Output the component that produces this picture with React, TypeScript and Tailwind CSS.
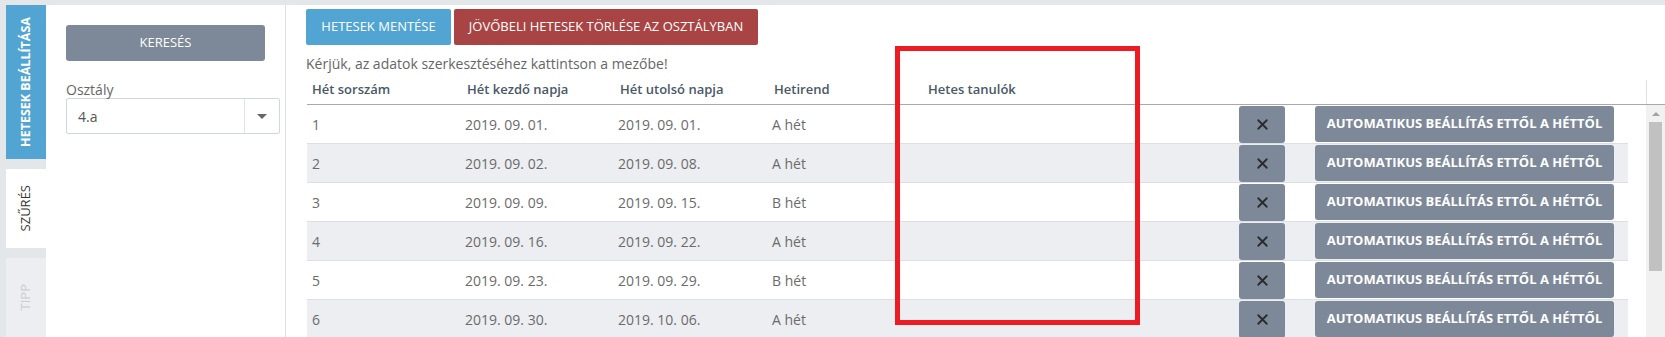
import { X } from "lucide-react"

const rows = [
  { n: "1", start: "2019. 09. 01.", end: "2019. 09. 01.", rend: "A hét" },
  { n: "2", start: "2019. 09. 02.", end: "2019. 09. 08.", rend: "A hét" },
  { n: "3", start: "2019. 09. 09.", end: "2019. 09. 15.", rend: "B hét" },
  { n: "4", start: "2019. 09. 16.", end: "2019. 09. 22.", rend: "A hét" },
  { n: "5", start: "2019. 09. 23.", end: "2019. 09. 29.", rend: "B hét" },
  { n: "6", start: "2019. 09. 30.", end: "2019. 10. 06.", rend: "A hét" },
]

export default function App() {
  return (
    <div
      className="relative w-[1665px] h-[337px] overflow-hidden bg-[#e4e7ea] pt-[5px] flex"
      style={{ fontFamily: "'Open Sans', 'Liberation Sans', sans-serif" }}
    >
      {/* Tabs */}
      <div className="w-[46px] pl-[6px] flex flex-col gap-[10px] shrink-0">
        <div className="h-[155px] bg-[#52a5d3] flex items-center justify-center">
          <span className="[writing-mode:vertical-rl] rotate-180 text-white font-bold text-[12.5px]">
            HETESEK BEÁLLÍTÁSA
          </span>
        </div>
        <div className="h-[80px] bg-white flex items-center justify-center">
          <span className="[writing-mode:vertical-rl] rotate-180 text-[#333] text-[13px]">
            SZŰRÉS
          </span>
        </div>
        <div className="h-[80px] bg-[#eceef1] flex items-center justify-center">
          <span className="[writing-mode:vertical-rl] rotate-180 text-[#c8ccd1] text-[13px]">
            TIPP
          </span>
        </div>
      </div>

      {/* Filter panel */}
      <div className="w-[240px] shrink-0 bg-white border-r border-[#dcdfe3] pl-[20px] pt-[20px]">
        <button className="w-[199px] h-[36px] rounded-[3px] bg-[#7d8898] text-white text-[13px]">
          KERESÉS
        </button>
        <div className="mt-[20px] text-[14px] leading-[17px] text-[#666]">Osztály</div>
        <div className="w-[214px] h-[36px] border border-[#cfd6de] rounded-[2px] flex items-center">
          <span className="flex-1 pl-[11px] text-[14px] text-[#555]">4.a</span>
          <div className="w-[35px] h-full border-l border-[#e1e5ea] flex items-center justify-center">
            <div className="w-0 h-0 border-l-[5px] border-r-[5px] border-t-[5px] border-l-transparent border-r-transparent border-t-[#666]" />
          </div>
        </div>
      </div>

      {/* Main */}
      <div className="flex-1 bg-white pt-[4px]">
        <div className="pl-[20px] flex gap-[3px]">
          <button className="w-[145px] h-[36px] rounded-[2px] bg-[#52a5d3] text-white text-[13px]">
            HETESEK MENTÉSE
          </button>
          <button className="w-[304px] h-[36px] rounded-[2px] bg-[#a84444] text-white text-[13px]">
            JÖVŐBELI HETESEK TÖRLÉSE AZ OSZTÁLYBAN
          </button>
        </div>
        <div className="pl-[20px] mt-[9px] text-[14px] leading-[20px] text-[#666]">
          Kérjük, az adatok szerkesztéséhez kattintson a mezőbe!
        </div>

        <div className="ml-[21px]">
          {/* Header */}
          <div className="flex h-[31px] border-b border-[#a9a9a9] text-[13px] font-semibold text-[#4a5868]">
            <div className="w-[155px] pl-[5px] pt-[6px]">Hét sorszám</div>
            <div className="w-[153px] pl-[5px] pt-[6px]">Hét kezdő napja</div>
            <div className="w-[154px] pl-[5px] pt-[6px]">Hét utolsó napja</div>
            <div className="w-[154px] pl-[5px] pt-[6px]">Hetirend</div>
            <div className="w-[723px] pl-[5px] pt-[6px]">Hetes tanulók</div>
            <div className="flex-1 mt-[6px] border-l border-[#dcdfe3]" />
          </div>

          {/* Body */}
          <div className="flex gap-[18px]">
            <div className="w-[1321px]">
              {rows.map((r, i) => (
                <div
                  key={r.n}
                  className={`flex items-center h-[39px] border-b border-[#dcdfe3] text-[14px] text-[#6b6b6b] ${
                    i % 2 === 1 ? "bg-[#eceef1]" : "bg-white"
                  }`}
                >
                  <div className="w-[155px] pl-[5px]">{r.n}</div>
                  <div className="w-[153px] pl-[3px]">{r.start}</div>
                  <div className="w-[154px] pl-[3px]">{r.end}</div>
                  <div className="w-[154px] pl-[3px]">{r.rend}</div>
                  <div className="w-[316px]" />
                  <button className="w-[46px] h-[37px] rounded-[3px] bg-[#7d8898] flex items-center justify-center">
                    <X size={17} strokeWidth={2.5} className="text-[#2a2a2a]" />
                  </button>
                  <div className="w-[30px]" />
                  <button className="w-[299px] h-[36px] rounded-[3px] bg-[#7d8898] text-white text-[13px] font-bold">
                    AUTOMATIKUS BEÁLLÍTÁS ETTŐL A HÉTTŐL
                  </button>
                </div>
              ))}
            </div>
            {/* Scrollbar */}
            <div className="w-[19px] h-[240px] bg-[#f1f1f1] flex flex-col items-center">
              <div className="h-[17px] flex items-center justify-center">
                <div className="w-0 h-0 border-l-[4px] border-r-[4px] border-b-[4px] border-l-transparent border-r-transparent border-b-[#a3a3a3]" />
              </div>
              <div className="w-[13px] h-[149px] bg-[#c1c1c1]" />
            </div>
          </div>
        </div>
      </div>

      {/* Annotation */}
      <div className="absolute left-[895px] top-[46px] w-[245px] h-[279px] border-[5px] border-[#ed1c24]" />
    </div>
  )
}
